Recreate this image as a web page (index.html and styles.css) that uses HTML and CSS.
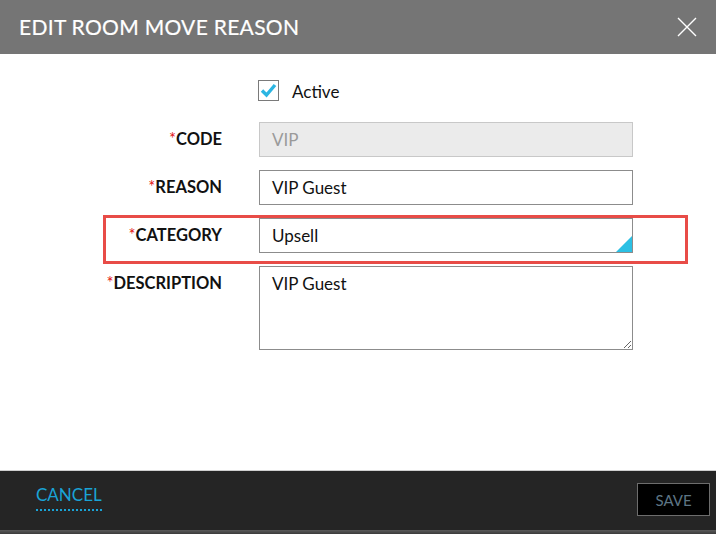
FILE: index.html
```html
<!DOCTYPE html>
<html>
<head>
<meta charset="utf-8">
<link rel="stylesheet" href="styles.css">
</head>
<body>
<div class="modal">
  <div class="header">
    <h1 class="title">EDIT ROOM MOVE REASON</h1>
    <button class="close" aria-label="Close">
      <svg width="20" height="20" viewBox="0 0 20 20"><path d="M1 1 L19 19 M19 1 L1 19" stroke="#fff" stroke-width="1.4" fill="none"/></svg>
    </button>
  </div>
  <div class="body">
    <div class="form">
      <div class="check-row">
        <span class="checkbox">
          <svg width="19" height="19" viewBox="0 0 19 19"><path d="M3 9.5 L7.5 14 L16 4" stroke="#2bb5e2" stroke-width="3.4" fill="none" stroke-linejoin="miter"/></svg>
        </span>
        <span class="check-label">Active</span>
      </div>
      <label class="label"><span class="req">*</span>CODE</label>
      <div class="input disabled">VIP</div>
      <label class="label"><span class="req">*</span>REASON</label>
      <div class="input">VIP Guest</div>
      <label class="label"><span class="req">*</span>CATEGORY</label>
      <div class="input select">Upsell<span class="corner"></span></div>
      <label class="label"><span class="req">*</span>DESCRIPTION</label>
      <textarea class="textarea">VIP Guest</textarea>
      <div class="highlight"></div>
    </div>
  </div>
  <div class="footer">
    <a class="cancel">CANCEL</a>
    <button class="save">SAVE</button>
  </div>
  <div class="bottom-strip"></div>
</div>
</body>
</html>
```
FILE: styles.css
```css
html, body {
  margin: 0;
  padding: 0;
  background: #fff;
  font-family: Lato, "Open Sans", sans-serif;
}
.modal {
  width: 716px;
  height: 534px;
  display: flex;
  flex-direction: column;
}
.header {
  height: 54px;
  background: #757575;
  display: flex;
  align-items: center;
  justify-content: space-between;
  padding: 0 19px 0 19px;
}
.title {
  margin: 0;
  font-size: 21px;
  font-weight: 400;
  color: #fff;
  letter-spacing: 0.3px;
  padding-bottom: 1px;
  -webkit-text-stroke: 0.2px #fff;
}
.close {
  background: none;
  border: 0;
  padding: 0;
  width: 20px;
  height: 20px;
}
.close svg { display: block; }
.body {
  flex: 1;
  padding-top: 26px;
}
.form {
  position: relative;
  display: grid;
  grid-template-columns: 222px 374px;
  column-gap: 37px;
  row-gap: 13px;
}
.check-row {
  grid-column: 2;
  display: flex;
  align-items: center;
  height: 21px;
  margin-bottom: 8px;
  margin-left: -1px;
}
.checkbox {
  width: 19px;
  height: 19px;
  border: 1px solid #7a7a7a;
  background: #fff;
  display: inline-block;
}
.checkbox svg { display: block; }
.check-label {
  margin-left: 13px;
  font-size: 17px;
  color: #111;
  margin-top: 1px;
}
.label {
  text-align: right;
  font-weight: 700;
  font-size: 16.5px;
  color: #111;
  line-height: 34px;
}
.req {
  color: #e32020;
  font-weight: 400;
}
.input {
  position: relative;
  height: 35px;
  box-sizing: border-box;
  border: 1px solid #8c8c8c;
  padding: 0 12px;
  font-size: 17px;
  line-height: 33px;
  color: #111;
}
.input.disabled {
  background: #ebebeb;
  border-color: #c8c8c8;
  color: #9a9a9a;
}
.corner {
  position: absolute;
  right: 0;
  bottom: 0;
  width: 0;
  height: 0;
  border-style: solid;
  border-width: 0 0 16px 16px;
  border-color: transparent transparent #2bc0e4 transparent;
}
.textarea {
  height: 84px;
  box-sizing: border-box;
  border: 1px solid #8c8c8c;
  padding: 6px 12px;
  font-family: Lato, "Open Sans", sans-serif;
  font-size: 17px;
  color: #111;
  margin: 0;
  resize: both;
  width: 374px;
}
.highlight {
  position: absolute;
  left: 103px;
  top: 135px;
  width: 585px;
  height: 49px;
  box-sizing: border-box;
  border: 3px solid #e84c47;
  pointer-events: none;
}
.footer {
  height: 59px;
  background: #252525;
  border-top: 1px solid #cfcfcf;
  display: flex;
  align-items: flex-start;
  justify-content: space-between;
  padding: 0 6px 0 36px;
}
.cancel {
  color: #1aa3d6;
  font-size: 17px;
  line-height: 20px;
  text-decoration: none;
  border-bottom: 2px dotted #1aa3d6;
  padding-bottom: 4px;
  margin-top: 14px;
  cursor: pointer;
}
.save {
  width: 73px;
  height: 33px;
  background: #000;
  border: 1px solid #6d6d6d;
  color: #5d7585;
  font-family: Lato, "Open Sans", sans-serif;
  font-size: 15px;
  padding: 0;
  margin-top: 12px;
}
.bottom-strip {
  height: 4px;
  background: linear-gradient(#5a5a5a, #3a3a3a);
}
```
